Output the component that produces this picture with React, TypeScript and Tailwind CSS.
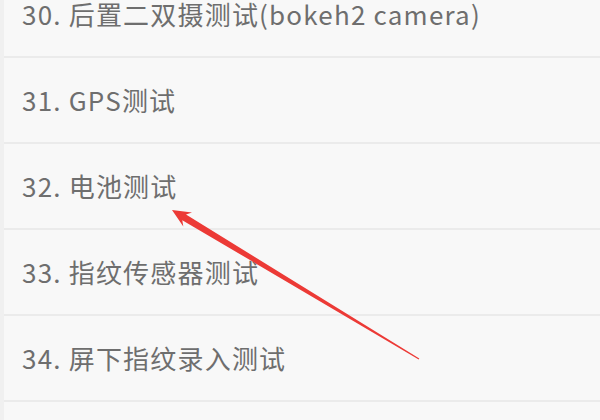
const items = [
  "30. 后置二双摄测试(bokeh2 camera)",
  "31. GPS测试",
  "32. 电池测试",
  "33. 指纹传感器测试",
  "34. 屏下指纹录入测试",
];

const App = () => {
  return (
    <div className="relative w-[600px] h-[420px] overflow-hidden bg-[#f8f8f8] border-l-4 border-[#f0f0f0]">
      {/* list */}
      <div className="-mt-[28px] flex flex-col">
        {items.map((label) => (
          <div
            key={label}
            className="h-[86px] flex items-center pl-[18px] border-b-2 border-[#ebebeb] text-[26px] tracking-[1.2px] text-[#6e6e6e] font-['Noto_Sans_CJK_SC',sans-serif] leading-none"
          >
            {label}
          </div>
        ))}
      </div>

      {/* annotation arrow */}
      <svg
        className="absolute -left-[4px] top-0 pointer-events-none"
        width="600"
        height="420"
        viewBox="0 0 600 420"
      >
        <polygon
          fill="#ec3a36"
          points="172,210 192,212.6 186,214.5 419.3,358.6 418.7,359.4 182.3,220.2 183.3,226.5"
        />
      </svg>
    </div>
  );
};

export default App;
